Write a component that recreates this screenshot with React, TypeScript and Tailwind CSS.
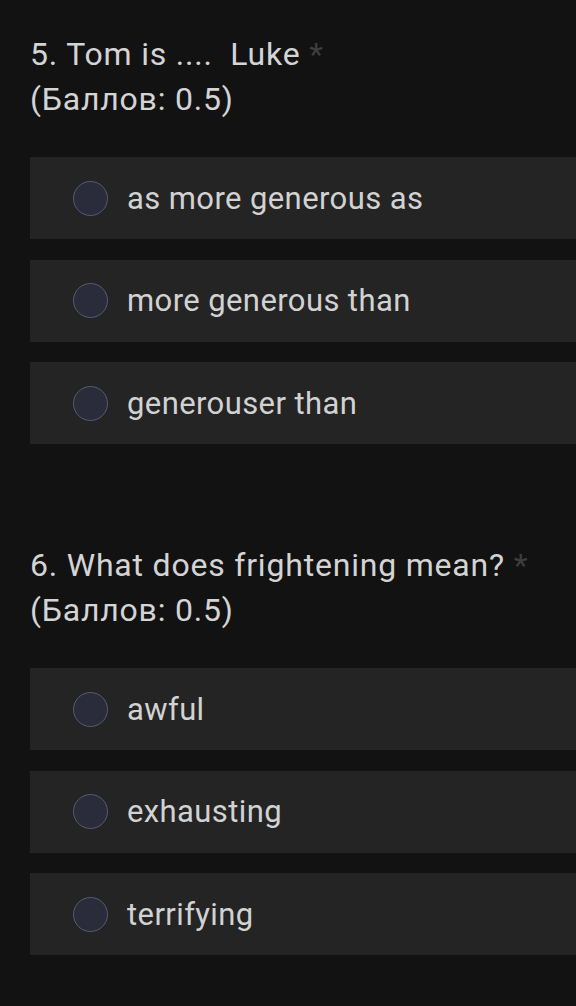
import React from "react";

type Question = {
  title: string;
  points: string;
  options: string[];
};

const questions: Question[] = [
  {
    title: "5. Tom is ....  Luke",
    points: "(Баллов: 0.5)",
    options: ["as more generous as", "more generous than", "generouser than"],
  },
  {
    title: "6. What does frightening mean?",
    points: "(Баллов: 0.5)",
    options: ["awful", "exhausting", "terrifying"],
  },
];

function Radio() {
  return (
    <span className="w-[35px] h-[35px] shrink-0 rounded-full border border-[#565b70] bg-[#2a2b3b]" />
  );
}

function Option({ label }: { label: string }) {
  return (
    <div className="flex items-center h-[82px] pl-[43px] bg-[#242424]">
      <Radio />
      <span className="ml-[19px] text-[31px] tracking-[0.4px] text-[#d2d2d2] leading-none">{label}</span>
    </div>
  );
}

export default function App() {
  return (
    <main
      className="min-h-screen bg-[#121212] pl-[30px] pt-[32px] overflow-hidden"
      style={{ fontFamily: "Roboto, 'Noto Sans', sans-serif" }}
    >
      {questions.map((q, i) => (
        <section key={i} className={i > 0 ? "mt-[99px]" : ""}>
          <h2 className="text-[32px] tracking-[0.8px] leading-[45px] text-[#d4d4d4] font-normal whitespace-pre">
            {q.title}
            <span className="text-[#3e3e3e]"> *</span>
            <br />
            {q.points}
          </h2>
          <div className="mt-[35px] flex flex-col gap-[20.5px]">
            {q.options.map((o) => (
              <Option key={o} label={o} />
            ))}
          </div>
        </section>
      ))}
    </main>
  );
}
